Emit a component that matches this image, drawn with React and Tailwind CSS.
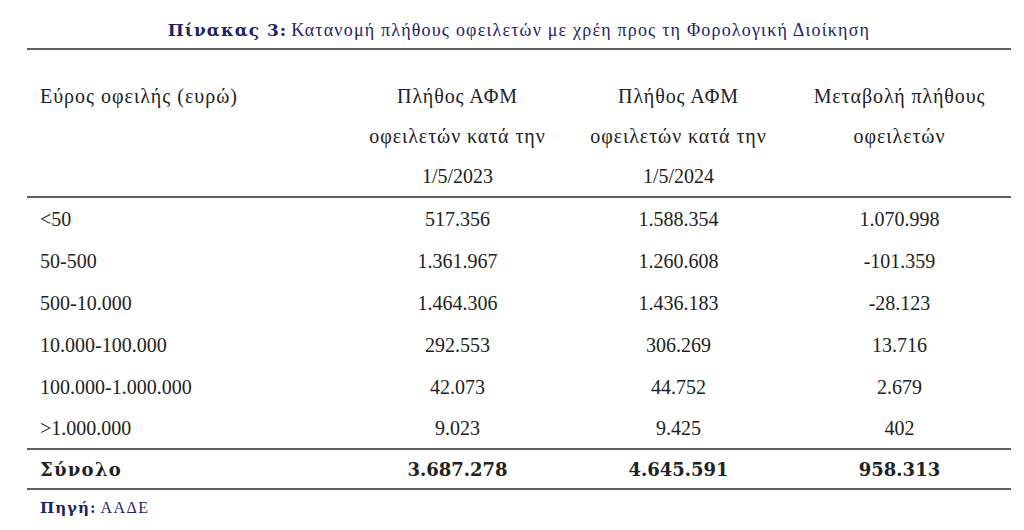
import React from "react";

const rows = [
  ["<50", "517.356", "1.588.354", "1.070.998"],
  ["50-500", "1.361.967", "1.260.608", "-101.359"],
  ["500-10.000", "1.464.306", "1.436.183", "-28.123"],
  ["10.000-100.000", "292.553", "306.269", "13.716"],
  ["100.000-1.000.000", "42.073", "44.752", "2.679"],
  [">1.000.000", "9.023", "9.425", "402"],
];

const grid = "grid grid-cols-[320px_221px_221px_221px]";
const boldFont = { fontFamily: '"DejaVu Serif", "Liberation Serif", serif' };

export default function App() {
  return (
    <div
      className="w-[1024px] h-[530px] bg-white overflow-hidden pl-[27px] pr-[13px] pt-[20px] text-[#222]"
      style={{ fontFamily: '"Liberation Serif", "DejaVu Serif", serif' }}
    >
      <div className="h-[20px] leading-[20px] text-center text-[#1f2266] mb-[8px] whitespace-nowrap">
        <span className="font-bold text-[17px] tracking-[1px]" style={boldFont}>
          Πίνακας 3:
        </span>{" "}
        <span className="text-[18px] tracking-[1.2px]">
          Κατανομή πλήθους οφειλετών με χρέη προς τη Φορολογική Διοίκηση
        </span>
      </div>
      <div className="border-t-2 border-[#5e5e5e]">
        <div className={`${grid} pt-[26px] border-b-2 border-[#5e5e5e] text-[20px] leading-[40px] tracking-[0.9px]`}>
          <div className="pl-[13px] tracking-[1px]">Εύρος οφειλής (ευρώ)</div>
          <div className="text-center">
            Πλήθος ΑΦΜ
            <br />
            οφειλετών κατά την
            <br />
            <span className="tracking-normal">1/5/2023</span>
          </div>
          <div className="text-center">
            Πλήθος ΑΦΜ
            <br />
            οφειλετών κατά την
            <br />
            <span className="tracking-normal">1/5/2024</span>
          </div>
          <div className="text-center">
            Μεταβολή πλήθους
            <br />
            οφειλετών
          </div>
        </div>
        {rows.map((r, i) => (
          <div
            key={i}
            className={`${grid} items-center text-[20px] ${i === rows.length - 1 ? "h-[40px]" : "h-[42px]"}`}
          >
            <div className="pl-[13px]">{r[0]}</div>
            <div className="text-center">{r[1]}</div>
            <div className="text-center">{r[2]}</div>
            <div className="text-center">{r[3]}</div>
          </div>
        ))}
        <div
          className={`${grid} items-center h-[42px] border-t-2 border-b-2 border-[#5e5e5e] text-[18px] font-bold`}
          style={boldFont}
        >
          <div className="pl-[13px] tracking-[1.3px]">Σύνολο</div>
          <div className="text-center">3.687.278</div>
          <div className="text-center">4.645.591</div>
          <div className="text-center">958.313</div>
        </div>
      </div>
      <div className="mt-[8px] pl-[13px] h-[20px] leading-[20px] text-[#1f2266] whitespace-nowrap">
        <span className="font-bold text-[15px] tracking-[1px]" style={boldFont}>
          Πηγή:
        </span>{" "}
        <span className="text-[16px] tracking-[1.5px]">ΑΑΔΕ</span>
      </div>
    </div>
  );
}
